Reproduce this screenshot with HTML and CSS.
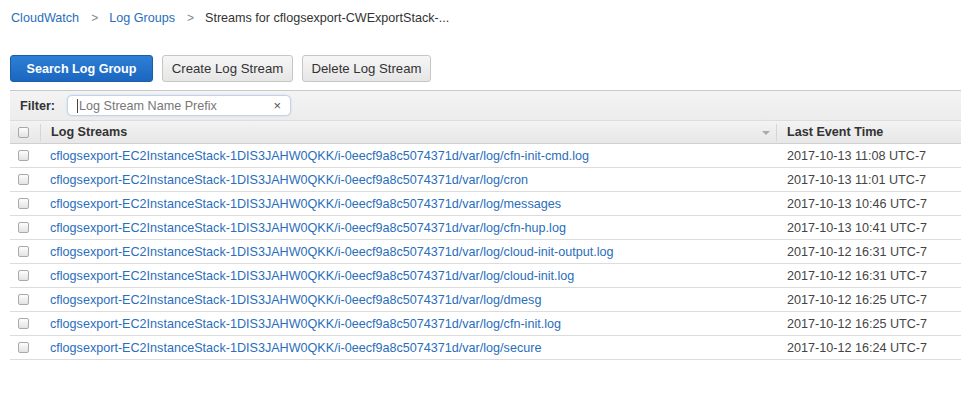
FILE: index.html
```html
<!DOCTYPE html>
<html>
<head>
<meta charset="utf-8">
<link rel="stylesheet" href="styles.css">
</head>
<body>
<nav class="crumbs">
  <a class="crumb-link">CloudWatch</a>
  <span class="sep">&gt;</span>
  <a class="crumb-link">Log Groups</a>
  <span class="sep">&gt;</span>
  <span class="crumb-current">Streams for cflogsexport-CWExportStack-...</span>
</nav>
<div class="toolbar">
  <button class="btn btn-primary">Search Log Group</button>
  <button class="btn btn-create">Create Log Stream</button>
  <button class="btn btn-delete">Delete Log Stream</button>
</div>
<div class="grid">
  <div class="filter-bar">
    <span class="filter-label">Filter:</span>
    <div class="filter-input">
      <span class="caret"></span><span class="placeholder">Log Stream Name Prefix</span>
      <span class="clear">×</span>
    </div>
  </div>
  <div class="head-row">
    <div class="cell-check"><span class="cb"></span></div>
    <div class="col-name head-cell">Log Streams<span class="sort-arrow"></span></div>
    <div class="col-time head-cell">Last Event Time</div>
  </div>
  <div class="row"><div class="cell-check"><span class="cb"></span></div><div class="col-name"><a>cflogsexport-EC2InstanceStack-1DIS3JAHW0QKK/i-0eecf9a8c5074371d/var/log/cfn-init-cmd.log</a></div><div class="col-time">2017-10-13 11:08 UTC-7</div></div>
  <div class="row"><div class="cell-check"><span class="cb"></span></div><div class="col-name"><a>cflogsexport-EC2InstanceStack-1DIS3JAHW0QKK/i-0eecf9a8c5074371d/var/log/cron</a></div><div class="col-time">2017-10-13 11:01 UTC-7</div></div>
  <div class="row"><div class="cell-check"><span class="cb"></span></div><div class="col-name"><a>cflogsexport-EC2InstanceStack-1DIS3JAHW0QKK/i-0eecf9a8c5074371d/var/log/messages</a></div><div class="col-time">2017-10-13 10:46 UTC-7</div></div>
  <div class="row"><div class="cell-check"><span class="cb"></span></div><div class="col-name"><a>cflogsexport-EC2InstanceStack-1DIS3JAHW0QKK/i-0eecf9a8c5074371d/var/log/cfn-hup.log</a></div><div class="col-time">2017-10-13 10:41 UTC-7</div></div>
  <div class="row"><div class="cell-check"><span class="cb"></span></div><div class="col-name"><a>cflogsexport-EC2InstanceStack-1DIS3JAHW0QKK/i-0eecf9a8c5074371d/var/log/cloud-init-output.log</a></div><div class="col-time">2017-10-12 16:31 UTC-7</div></div>
  <div class="row"><div class="cell-check"><span class="cb"></span></div><div class="col-name"><a>cflogsexport-EC2InstanceStack-1DIS3JAHW0QKK/i-0eecf9a8c5074371d/var/log/cloud-init.log</a></div><div class="col-time">2017-10-12 16:31 UTC-7</div></div>
  <div class="row"><div class="cell-check"><span class="cb"></span></div><div class="col-name"><a>cflogsexport-EC2InstanceStack-1DIS3JAHW0QKK/i-0eecf9a8c5074371d/var/log/dmesg</a></div><div class="col-time">2017-10-12 16:25 UTC-7</div></div>
  <div class="row"><div class="cell-check"><span class="cb"></span></div><div class="col-name"><a>cflogsexport-EC2InstanceStack-1DIS3JAHW0QKK/i-0eecf9a8c5074371d/var/log/cfn-init.log</a></div><div class="col-time">2017-10-12 16:25 UTC-7</div></div>
  <div class="row"><div class="cell-check"><span class="cb"></span></div><div class="col-name"><a>cflogsexport-EC2InstanceStack-1DIS3JAHW0QKK/i-0eecf9a8c5074371d/var/log/secure</a></div><div class="col-time">2017-10-12 16:24 UTC-7</div></div>
</div>
</body>
</html>
```
FILE: styles.css
```css
* { box-sizing: border-box; }
html, body { background: #fff; }
body {
  margin: 0 0 0 10px;
  font-family: "Liberation Sans", Arial, sans-serif;
  font-size: 12.6px;
  color: #333;
}
.crumbs {
  display: flex;
  align-items: center;
  height: 36px;
  padding-left: 1px;
}
.crumb-link { color: #2a6ebb; }
.sep { color: #888; margin: 0 11px 0 12px; font-size: 12px; }
.crumb-current { color: #333; }
.toolbar {
  display: flex;
  gap: 9px;
  margin-top: 19px;
  height: 27px;
}
.btn {
  font-family: inherit;
  font-size: 13.2px;
  height: 27px;
  padding: 0;
  white-space: nowrap;
  border-radius: 3px;
  border: 1px solid #c6c6c6;
  background: linear-gradient(#f6f6f6, #e6e6e6);
  color: #333;
}
.btn-primary {
  width: 143px;
  font-size: 12.6px;
  color: #fff;
  font-weight: bold;
  border-color: #1a5da8;
  background: linear-gradient(#2d7fd6, #1c66c0);
}
.btn-create { width: 131px; }
.btn-delete { width: 129px; }
.grid {
  margin-top: 8px;
  border-top: 1px solid #c9c9c9;
}
.filter-bar {
  display: flex;
  align-items: center;
  height: 29px;
  background: linear-gradient(#f4f4f4, #ececec);
  padding-left: 10px;
}
.filter-label { font-weight: bold; color: #333; width: 47px; }
.filter-input {
  position: relative;
  width: 224px;
  height: 21px;
  border: 1px solid #c3d3e6;
  border-radius: 5px;
  background: #fff;
  box-shadow: 0 0 2px #bcd3ee;
  display: flex;
  align-items: center;
  padding-left: 9px;
  color: #777;
}
.caret { width: 1px; height: 14px; background: #444; margin-right: 1px; }
.clear { position: absolute; right: 9px; top: 2px; color: #555; font-size: 13px; }
.head-row {
  display: flex;
  height: 24px;
  align-items: center;
  border-top: 1px solid #dcdcdc;
  border-bottom: 1px solid #cfcfcf;
  background: linear-gradient(#f3f3f3, #e7e7e7);
}
.row {
  display: flex;
  height: 24px;
  align-items: center;
  border-bottom: 1px solid #dcdcdc;
}
.cell-check {
  width: 30px;
  display: flex;
  align-items: center;
  padding-left: 8px;
}
.cb {
  width: 11px;
  height: 11px;
  border: 1px solid #a9a9a9;
  border-radius: 2px;
  background: linear-gradient(#fdfdfd, #e3e3e3);
}
.col-name {
  width: 737px;
  padding-left: 10px;
  white-space: nowrap;
}
.col-name a { color: #2a6ebb; }
.col-time { flex: 1; padding-left: 10px; color: #444; white-space: nowrap; }
.head-cell {
  font-weight: bold;
  color: #333;
  height: 17px;
  line-height: 17px;
}
.head-row .col-name {
  position: relative;
  border-left: 1px solid #d5d5d5;
  border-right: 1px solid #d5d5d5;
}
.sort-arrow {
  position: absolute;
  right: 6px;
  top: 7px;
  width: 0;
  height: 0;
  border-left: 4px solid transparent;
  border-right: 4px solid transparent;
  border-top: 4px solid #aaa;
}
```
